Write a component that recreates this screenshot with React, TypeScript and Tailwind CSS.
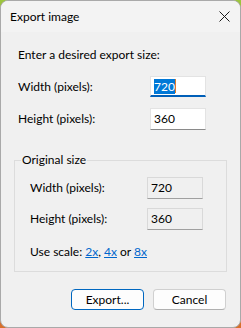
export default function App() {
  return (
    <div className="h-[328px] w-[241px] bg-[linear-gradient(180deg,#9cc63d_0%,#c7472f_45%,#d8702b_100%)] font-['Lato',sans-serif] text-[12px] text-black">
      <div className="flex h-full w-full flex-col overflow-hidden rounded-[8px] border border-[#a9a9a9] bg-[#f0f0f0]">
        {/* title bar */}
        <div className="flex h-[31px] shrink-0 items-center justify-between bg-[#f3f3f3] pl-[9px] pr-[9px]">
          <span className="leading-none">Export image</span>
          <svg width="11" height="11" viewBox="0 0 11 11" className="mr-[1px]">
            <path d="M0.5 0.5L10.5 10.5M10.5 0.5L0.5 10.5" stroke="#1a1a1a" strokeWidth="1" />
          </svg>
        </div>

        <div className="flex flex-col px-[17px]">
          <div className="mt-[15px] leading-[16px]">Enter a desired export size:</div>

          <div className="mt-[13px] flex h-[21px] items-center">
            <span className="w-[132px]">Width (pixels):</span>
            <div className="flex h-[21px] w-[56px] items-center border border-b-2 border-[#e3e3e3] border-b-[#005fb8] bg-white pl-[3px]">
              <span className="bg-[#0078d7] leading-[15px] text-white">720</span>
              <span className="h-[14px] w-px bg-[#e07b2a]" />
            </div>
          </div>

          <div className="mt-[11px] flex h-[22px] items-center">
            <span className="w-[132px]">Height (pixels):</span>
            <div className="flex h-[22px] w-[56px] items-center border border-[#e3e3e3] border-b-[#8a8a8a] bg-white pl-[3px]">
              360
            </div>
          </div>

          {/* group box */}
          <div className="relative -mx-[4px] mt-[30px] flex h-[112px] flex-col border border-[#dcdcdc] px-[15px]">
            <span className="absolute -top-[9px] left-[6px] bg-[#f0f0f0] px-[1px] leading-[16px]">Original size</span>

            <div className="mt-[16px] flex h-[22px] items-center">
              <span className="w-[117px]">Width (pixels):</span>
              <div className="flex h-[22px] w-[56px] items-center border border-[#d9d9d9] border-b-[#a0a0a0] bg-[#f0f0f0] pl-[3px]">
                720
              </div>
            </div>

            <div className="mt-[9px] flex h-[22px] items-center">
              <span className="w-[117px]">Height (pixels):</span>
              <div className="flex h-[22px] w-[56px] items-center border border-[#d9d9d9] border-b-[#a0a0a0] bg-[#f0f0f0] pl-[3px]">
                360
              </div>
            </div>

            <div className="mt-[14px] leading-[16px]">
              Use scale: <a href="#" className="text-[#0066cc] underline">2x</a>,{" "}
              <a href="#" className="text-[#0066cc] underline">4x</a> or{" "}
              <a href="#" className="text-[#0066cc] underline">8x</a>
            </div>
          </div>

          <div className="mt-[17px] flex justify-end gap-[9px]">
            <button className="flex h-[21px] w-[73px] items-center justify-center rounded-[4px] border border-[#0067c0] bg-[#fdfdfd]">
              Export...
            </button>
            <button className="-mr-[3px] flex h-[21px] w-[73px] items-center justify-center rounded-[4px] border border-[#d0d0d0] border-b-[#b0b0b0] bg-[#fdfdfd]">
              Cancel
            </button>
          </div>
        </div>
      </div>
    </div>
  );
}
